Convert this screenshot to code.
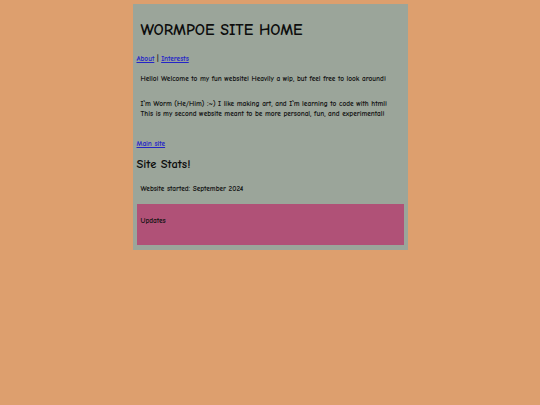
import React from 'react';

const App = () => {
  return (
    <div className="min-h-screen bg-[#dd9f6e] pt-[4px] font-['Comic_Sans_MS','Comic_Neue','DejaVu_Sans',sans-serif] text-[#111]">
      <div className="mx-auto w-[275px] bg-[#9ba59a] px-[4px] pb-[5px] pt-[16px]">
        <h1 className="pl-[4px] text-[16px] font-bold leading-[20px] text-[#0d0d0d]">WORMPOE SITE HOME</h1>

        <div className="mt-[14px] text-[7.3px] font-bold leading-[10px]">
          <a href="#" className="text-[#2424c8] underline">About</a> |{' '}
          <a href="#" className="text-[#2424c8] underline">Interests</a>
        </div>

        <p className="mt-[10px] pl-[4px] text-[7.3px] font-bold leading-[10px]">
          Hello! Welcome to my fun website! Heavily a wip, but feel free to look around!
        </p>

        <p className="mt-[15px] pl-[4px] text-[7.3px] font-bold leading-[10px]">
          I`m Worm (He/Him) :~) I like making art, and I`m learning to code with html!
          <br />
          This is my second website meant to be more personal, fun, and experimental!
        </p>

        <div className="mt-[20px] text-[7.3px] font-bold leading-[10px]">
          <a href="#" className="text-[#2424c8] underline">Main site</a>
        </div>

        <h2 className="mt-[8px] text-[12.5px] font-bold leading-[14px] text-[#0d0d0d]">Site Stats!</h2>

        <p className="mt-[13px] pl-[4px] text-[7.3px] font-bold leading-[10px]">Website started: September 2024</p>

        <div className="mt-[10px] h-[41px] bg-[#b05177] pl-[4px] pt-[12px] text-[7.3px] font-bold leading-[10px]">
          Updates
        </div>
      </div>
    </div>
  );
};

export default App;
